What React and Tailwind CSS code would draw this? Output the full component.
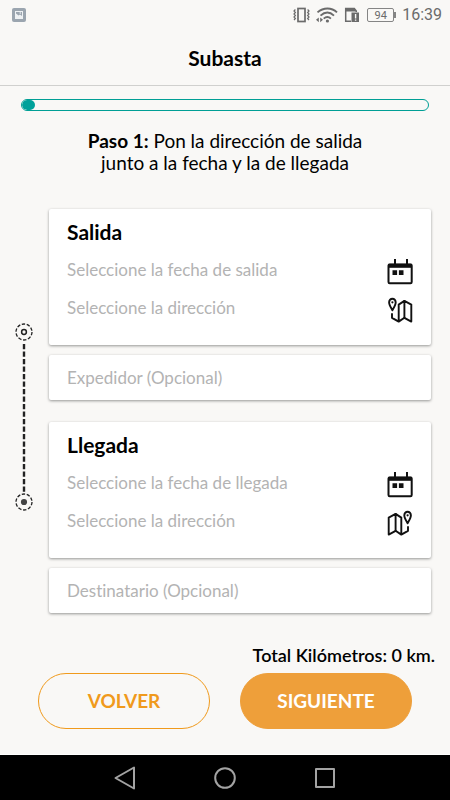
import React, { useState } from 'react';

const CalendarIcon = () => (
  <svg className="w-[26px] h-[26px]" viewBox="0 0 26 26" fill="none" stroke="#111" aria-hidden="true">
    <rect x="1.5" y="5.4" width="23.2" height="18.8" rx="1.2" strokeWidth="2" />
    <path d="M1.5 4.8h23.2v4H1.5z" fill="#111" stroke="none" />
    <path d="M8 0v6M20 0v6" strokeWidth="2" />
    <path d="M5.5 11.3h4.6v4.6H5.5zM11.9 11.3h4.6v4.6h-4.6z" fill="#111" stroke="none" />
  </svg>
);

const MapPinIcon = ({ flipped }) => (
  <svg
    className={flipped ? 'w-[26px] h-[26px] -scale-x-100' : 'w-[26px] h-[26px]'}
    viewBox="0 0 26 26"
    fill="none"
    stroke="#111"
    strokeWidth="1.9"
    strokeLinejoin="round"
    strokeLinecap="round"
    aria-hidden="true"
  >
    <path d="M5.4 13.2C3.8 10.4 2.1 7.8 2.1 5.2a3.3 3.5 0 0 1 6.6 0c0 2.6-1.7 5.2-3.3 8z" />
    <circle cx="5.4" cy="5.3" r="1.1" fill="#111" stroke="none" />
    <path d="M5 17v3.8l6.7 3.8V7.6l5.7-3.7 6.9 3.7v17l-6.9-3.8-5.7 3.8" />
    <path d="M17.4 3.9v16.9" />
  </svg>
);

const RouteLine = () => (
  <svg className="w-[18px] h-[188px]" viewBox="0 0 18 188" fill="none" stroke="#222" aria-hidden="true">
    <circle cx="9" cy="9" r="8" strokeWidth="1.3" strokeDasharray="3.4 1.63" />
    <circle cx="9" cy="9" r="2.4" strokeWidth="1.5" />
    <path d="M9 21v148" strokeWidth="2.4" strokeDasharray="5.2 2.3" />
    <circle cx="9" cy="179" r="8" strokeWidth="1.3" strokeDasharray="3.4 1.63" />
    <circle cx="9" cy="179" r="3.1" fill="#444" stroke="none" />
  </svg>
);

const StatusBar = () => (
  <div className="flex h-[30px] items-center justify-between pl-3 pr-2 font-[Roboto,sans-serif] text-[#6b6b6b]">
    <svg className="w-[14px] h-[14px]" viewBox="0 0 14 14" aria-hidden="true">
      <rect width="14" height="14" rx="2" fill="#9ba5af" />
      <path d="M3 3h8v8H3z" fill="#eef1f3" />
      <path d="M4 4h6v4L8 6.5 6.6 7.6 4 5.4z" fill="#9ba5af" />
      <circle cx="8.3" cy="5" r=".8" fill="#eef1f3" />
    </svg>
    <div className="flex items-center gap-[6px]">
      <svg className="w-[17px] h-[16px]" viewBox="0 0 17 16" fill="none" stroke="currentColor" aria-hidden="true">
        <rect x="5" y="1.5" width="7" height="13" strokeWidth="1.7" />
        <path d="M2.4 2.5L1 4l1.4 1.5L1 7l1.4 1.5L1 10l1.4 1.5L1 13M14.6 2.5L16 4l-1.4 1.5L16 7l-1.4 1.5L16 10l-1.4 1.5L16 13" strokeWidth="1.2" />
      </svg>
      <svg className="w-[22px] h-[16px]" viewBox="0 0 22 16" fill="none" stroke="currentColor" aria-hidden="true">
        <path d="M1.5 5.4c6-5.2 14-5.2 19.5 0M4.5 8.6c4.3-3.8 9.4-3.8 13.5 0M7.7 11.6c2.3-2 5-2 7.2 0" strokeWidth="1.9" />
        <circle cx="11.4" cy="14" r="1.6" fill="currentColor" stroke="none" />
        <path d="M0 12.8l2.8-2.4v4.8zM7 12.8l-2.8-2.4v4.8z" fill="currentColor" stroke="none" />
      </svg>
      <svg className="w-[16px] h-[16px]" viewBox="0 0 16 16" fill="none" stroke="currentColor" aria-hidden="true">
        <path d="M7 14.3H1.7V1.4h8.6l2 2.6v1" strokeWidth="1.5" />
        <path d="M1 1h9.5l1.8 3.4H1z" fill="currentColor" stroke="none" />
        <path d="M7.5 5.5H15V15H7.5z" fill="currentColor" stroke="none" />
        <path d="M11.6 7v4.5M11.6 12.6v1.2" stroke="#f9f8f6" strokeWidth="1.4" />
      </svg>
      <div className="ml-[1px] flex items-center">
        <span className="flex h-[14px] w-[27px] items-center justify-center rounded-[2px] border border-[#858585] text-[11px] leading-none">
          94
        </span>
        <span className="h-[6px] w-[2px] bg-[#858585]" />
      </div>
      <span className="text-[16px] leading-none">16:39</span>
    </div>
  </div>
);

const FieldRow = ({ placeholder, buttonLabel, children }) => (
  <div className="flex h-[38px] items-center">
    <input
      type="text"
      aria-label={placeholder}
      placeholder={placeholder}
      className="min-w-0 flex-1 bg-transparent text-[17px] leading-6 outline-none placeholder:text-[#b3b3b3]"
    />
    <button type="button" aria-label={buttonLabel} className="flex h-full items-center pt-1">
      {children}
    </button>
  </div>
);

const StopCard = ({ title, datePlaceholder, flipped }) => (
  <section className="rounded-[2px] bg-white px-[18px] pt-2 pb-[18px] shadow-[0_1px_3px_rgba(0,0,0,0.4)]">
    <h2 className="mb-1 text-[21px] leading-[30px] font-bold">{title}</h2>
    <FieldRow placeholder={datePlaceholder} buttonLabel={`Fecha de ${title.toLowerCase()}`}>
      <CalendarIcon />
    </FieldRow>
    <FieldRow placeholder="Seleccione la dirección" buttonLabel={`Mapa de ${title.toLowerCase()}`}>
      <MapPinIcon flipped={flipped} />
    </FieldRow>
  </section>
);

const OptionalField = ({ placeholder }) => (
  <input
    type="text"
    aria-label={placeholder}
    placeholder={placeholder}
    className="h-[45px] w-full rounded-[2px] bg-white px-[18px] text-[17px] leading-6 shadow-[0_1px_3px_rgba(0,0,0,0.4)] outline-none placeholder:text-[#b3b3b3]"
  />
);

const NavigationBar = () => (
  <nav className="mt-auto flex h-[46px] items-center justify-center gap-[78px] border-t border-white bg-black">
    <button type="button" aria-label="Atrás">
      <svg className="w-[22px] h-[24px]" viewBox="0 0 22 24" fill="none" stroke="#a3a3a3" strokeWidth="2" strokeLinejoin="round">
        <path d="M20 1.5v21L1.5 12z" />
      </svg>
    </button>
    <button type="button" aria-label="Inicio">
      <svg className="w-[22px] h-[22px]" viewBox="0 0 22 22" fill="none" stroke="#a3a3a3" strokeWidth="2">
        <circle cx="11" cy="11" r="9.8" />
      </svg>
    </button>
    <button type="button" aria-label="Recientes">
      <svg className="w-[22px] h-[22px]" viewBox="0 0 22 22" fill="none" stroke="#a3a3a3" strokeWidth="2" strokeLinejoin="round">
        <path d="M2 2h18v18H2z" />
      </svg>
    </button>
  </nav>
);

const App = () => {
  const [progress] = useState(3.3);

  return (
    <div className="flex min-h-screen flex-col bg-[#f9f8f6] font-[Lato,sans-serif] text-black [font-variant-ligatures:none]">
      <StatusBar />
      <header className="flex h-14 items-center justify-center border-b border-[#d0d0ce]">
        <h1 className="text-[21px] leading-6 font-bold">Subasta</h1>
      </header>

      <main>
        {/* Step progress */}
        <div className="px-[21px] pt-[13px]">
          <div
            role="progressbar"
            aria-label="Progreso"
            aria-valuenow={progress}
            className="h-3 overflow-hidden rounded-full border border-[#009f95]"
          >
            <div className="h-full rounded-full bg-[#00a19a]" style={{ width: `${progress}%` }} />
          </div>
        </div>
        <p className="mt-[19px] text-center text-[19px] leading-[22px]">
          <strong>Paso 1:</strong> Pon la dirección de salida
          <br />
          junto a la fecha y la de llegada
        </p>

        {/* Route form */}
        <div className="mt-[35px] flex pr-[19px]">
          <div className="flex w-[49px] shrink-0 items-center justify-center pt-3 pr-px">
            <RouteLine />
          </div>
          <div className="min-w-0 flex-1">
            <StopCard title="Salida" datePlaceholder="Seleccione la fecha de salida" />
            <div className="mt-[10px] mb-[22px] flex">
              <OptionalField placeholder="Expedidor (Opcional)" />
            </div>
            <StopCard title="Llegada" datePlaceholder="Seleccione la fecha de llegada" flipped />
            <div className="mt-[10px] flex">
              <OptionalField placeholder="Destinatario (Opcional)" />
            </div>
          </div>
        </div>

        <p className="mt-[30px] pr-[15px] text-right text-[18px] leading-6 font-semibold">
          Total Kilómetros: 0 km.
        </p>
        <div className="mt-[6px] mb-6 flex gap-[30px] px-[38px]">
          <button type="button" className="h-14 flex-1 rounded-full border border-[#f09a1c] text-[19px] font-bold text-[#f09a1c]">
            VOLVER
          </button>
          <button type="button" className="h-14 flex-1 rounded-full border border-[#ee9f3a] bg-[#ee9f3a] text-[19px] font-bold text-white">
            SIGUIENTE
          </button>
        </div>
      </main>

      <NavigationBar />
    </div>
  );
};

export default App;
